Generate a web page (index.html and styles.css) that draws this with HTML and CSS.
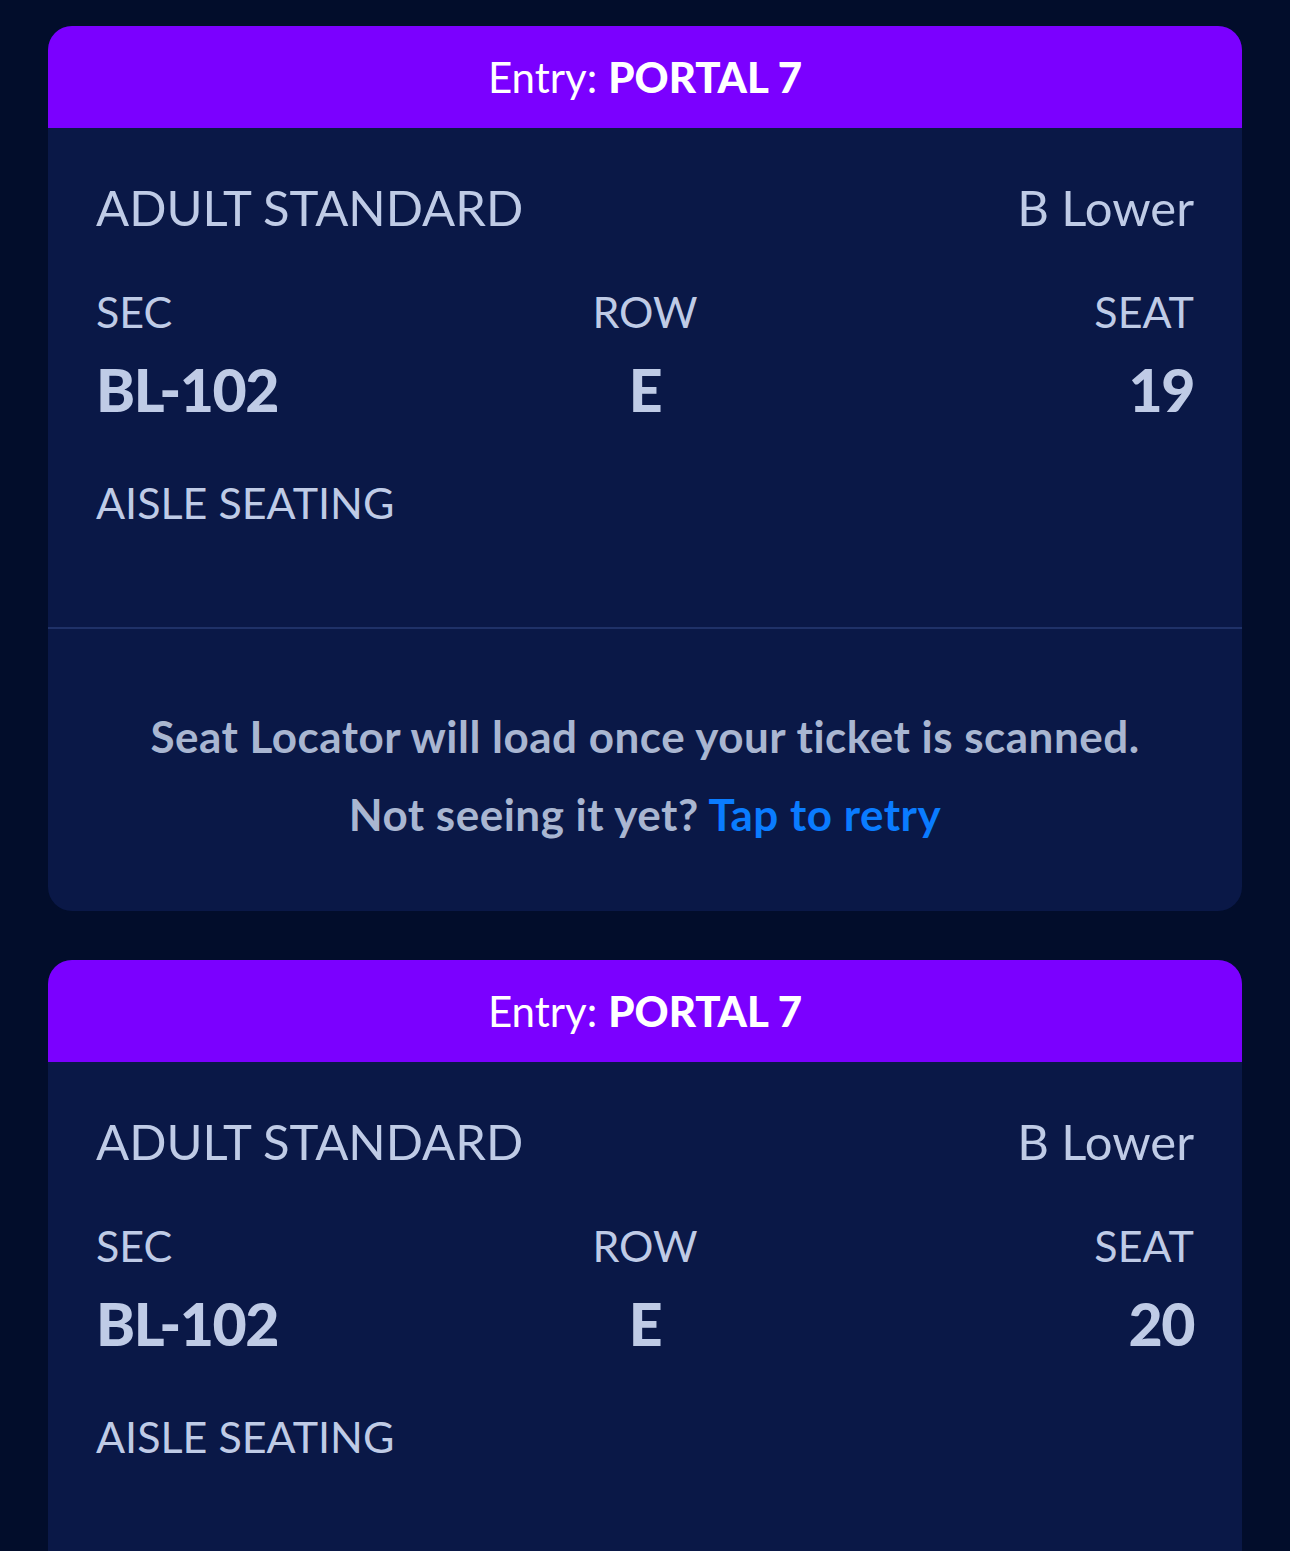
FILE: index.html
```html
<!DOCTYPE html>
<html lang="en">
<head>
    <meta charset="UTF-8">
    <meta name="viewport" content="width=device-width, initial-scale=1.0">
    <title>My Tickets</title>
    <link rel="stylesheet" href="styles.css">
</head>
<body>

<div class="ticket">
    <div class="entry">Entry: <strong>PORTAL 7</strong></div>
    <div class="details">
        <div class="top-row">
            <span>ADULT STANDARD</span>
            <span>B Lower</span>
        </div>
        <div class="seat-grid">
            <div class="cell left">
                <div class="label">SEC</div>
                <div class="value">BL-102</div>
            </div>
            <div class="cell center">
                <div class="label">ROW</div>
                <div class="value">E</div>
            </div>
            <div class="cell right">
                <div class="label">SEAT</div>
                <div class="value">19</div>
            </div>
        </div>
        <div class="extra">AISLE SEATING</div>
    </div>
    <div class="notice">
        <p>Seat Locator will load once your ticket is scanned.</p>
        <p>Not seeing it yet? <a href="#" class="retry">Tap to retry</a></p>
    </div>
</div>

<div class="ticket">
    <div class="entry">Entry: <strong>PORTAL 7</strong></div>
    <div class="details">
        <div class="top-row">
            <span>ADULT STANDARD</span>
            <span>B Lower</span>
        </div>
        <div class="seat-grid">
            <div class="cell left">
                <div class="label">SEC</div>
                <div class="value">BL-102</div>
            </div>
            <div class="cell center">
                <div class="label">ROW</div>
                <div class="value">E</div>
            </div>
            <div class="cell right">
                <div class="label">SEAT</div>
                <div class="value">20</div>
            </div>
        </div>
        <div class="extra">AISLE SEATING</div>
    </div>
    <div class="notice">
        <p>Seat Locator will load once your ticket is scanned.</p>
        <p>Not seeing it yet? <a href="#" class="retry">Tap to retry</a></p>
    </div>
</div>

</body>
</html>
```

FILE: styles.css
```css
body {
    font-family: Lato, "Noto Sans", sans-serif;
    background-color: #020d2b;
    margin: 0;
    padding: 26px 48px;
    display: flex;
    flex-direction: column;
    gap: 49px;
}

.ticket {
    background-color: #0a1847;
    border-radius: 24px;
    overflow: hidden;
    color: #bfcbe6;
}

.entry {
    background-color: #7b00ff;
    color: #fff;
    height: 102px;
    display: flex;
    justify-content: center;
    align-items: center;
    font-size: 42px;
    gap: 11px;
}

.entry strong {
    font-weight: 900;
}

.details {
    padding: 49px 48px 99px;
    border-bottom: 2px solid #1f3168;
}

.top-row {
    display: flex;
    justify-content: space-between;
    font-size: 49px;
    line-height: 60px;
}

.seat-grid {
    display: grid;
    grid-template-columns: 1fr 1fr 1fr;
    margin-top: 50px;
}

.left { text-align: left; }
.center { text-align: center; }
.right { text-align: right; }

.label {
    font-size: 43px;
    line-height: 50px;
}

.value {
    font-size: 59px;
    font-weight: 900;
    letter-spacing: -1.5px;
    line-height: 70px;
    margin-top: 18px;
}

.extra {
    font-size: 43px;
    line-height: 50px;
    margin-top: 53px;
}

.notice {
    padding: 68px 48px 58px;
    text-align: center;
    color: #a9b6d1;
    font-size: 44px;
    font-weight: 700;
    letter-spacing: 0.5px;
    line-height: 78px;
}

.notice p {
    margin: 0;
}

.retry {
    color: #0a7cff;
    text-decoration: none;
}
```
